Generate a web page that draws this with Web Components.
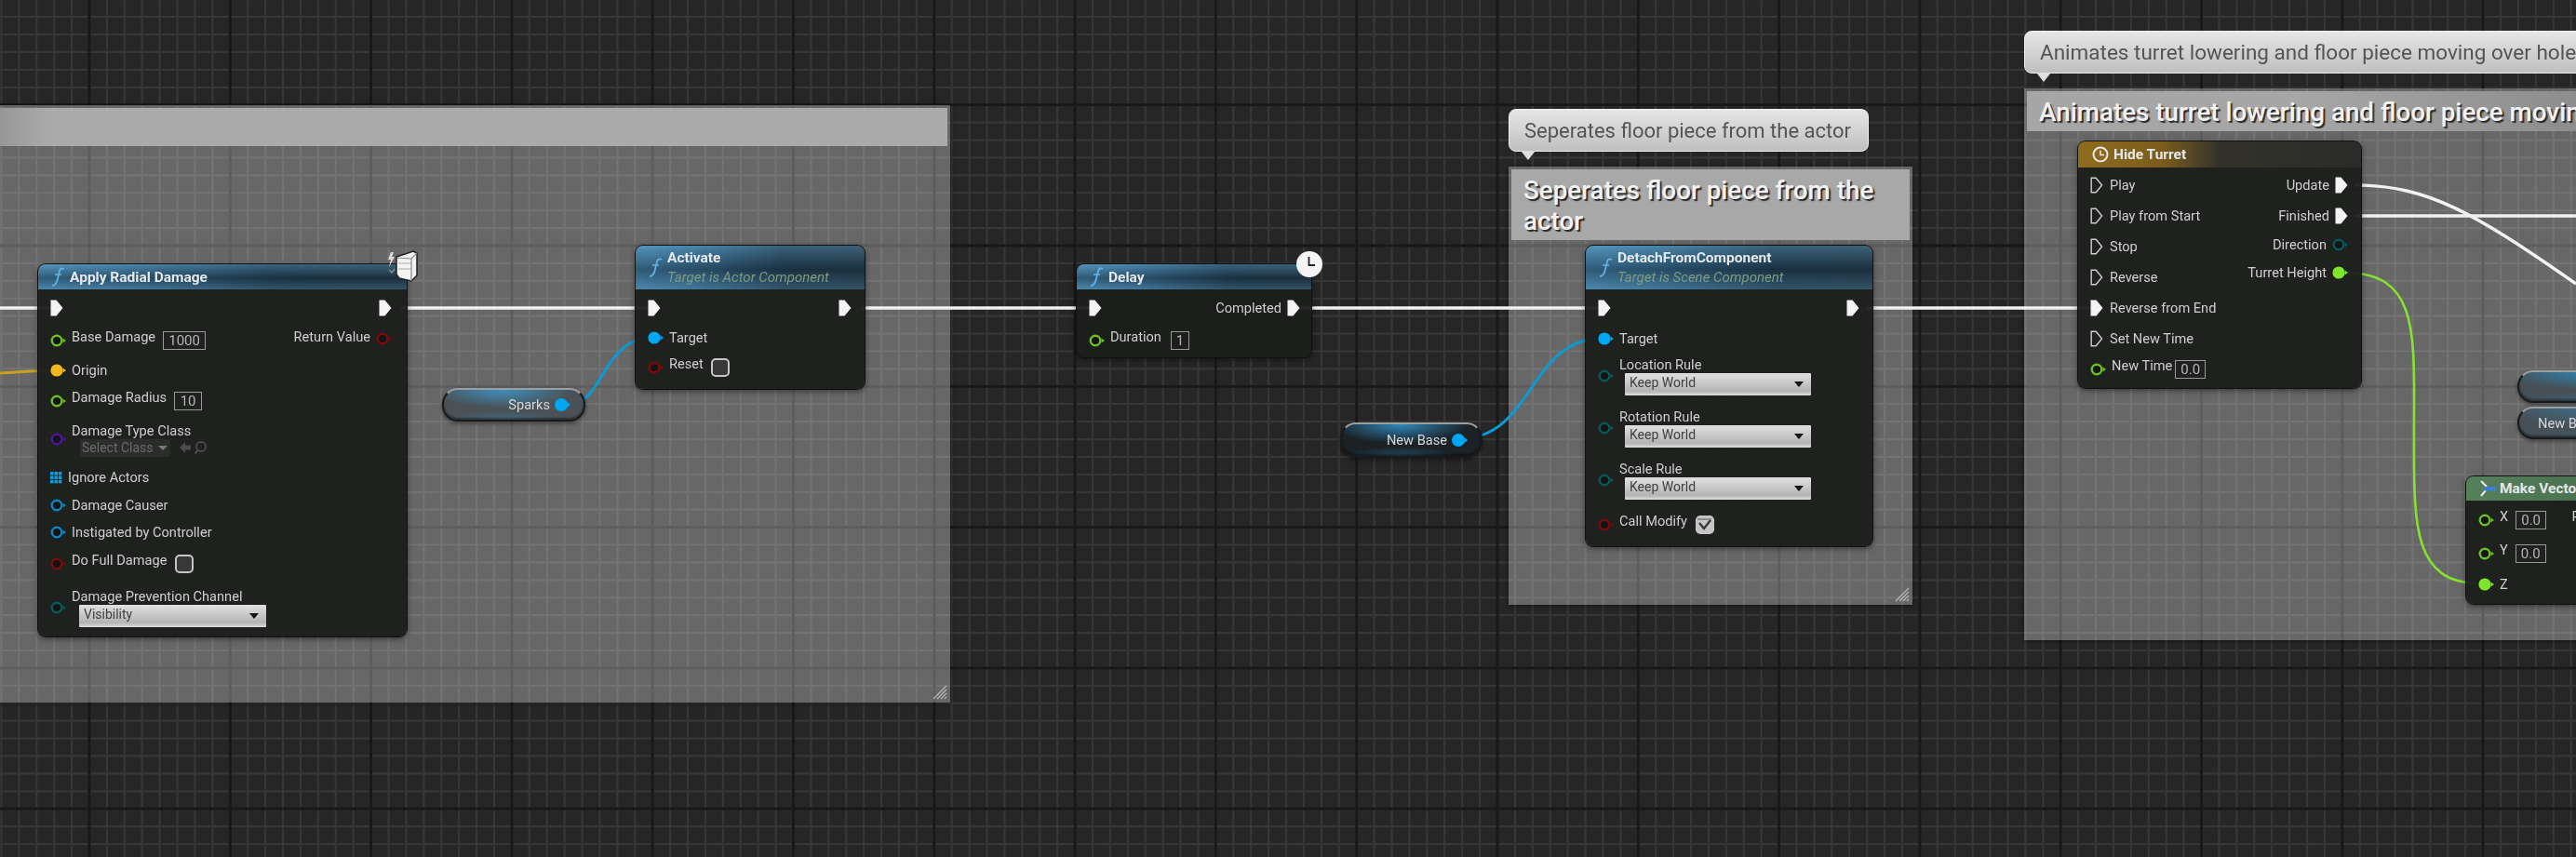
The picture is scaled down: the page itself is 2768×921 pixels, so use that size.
<!DOCTYPE html>
<html>
<head>
<meta charset="utf-8">
<style>
  html, body { margin: 0; padding: 0; background: #262626; overflow: hidden; }
</style>
</head>
<body>
<bp-graph>
  <bp-comment x="-40" y="113" w="1061" h="642" style="--title-bg:linear-gradient(90deg,#8a8a8a,#aaa 90px)"></bp-comment>
  <bp-comment x="1621" y="179" w="434" h="471" heading="Seperates floor piece from the actor" bubble="Seperates floor piece from the actor"></bp-comment>
  <bp-comment x="2175" y="95" w="800" h="593" style="--title-bg:linear-gradient(90deg,#a6a6a6,#a6a6a6 300px,#8c8c8c 600px);--bubble-size:22.5px" heading="Animates turret lowering and floor piece moving over hole" bubble="Animates turret lowering and floor piece moving over hole"></bp-comment>

  <bp-wires></bp-wires>

  <bp-node x="41" y="284" w="396" title="Apply Radial Damage" icon="fn" head="27" style="--pr:16px">
    <bp-row h="40" split><bp-pin kind="exec" on></bp-pin><bp-pin kind="exec" on></bp-pin></bp-row>
    <bp-row h="30" split>
      <bp-row><bp-pin color="#6cc020"></bp-pin><bp-label up>Base Damage</bp-label><bp-value w="46">1000</bp-value></bp-row>
      <bp-row><bp-label up>Return Value</bp-label><bp-pin color="#7c0a0a" style="margin-bottom:4px"></bp-pin></bp-row>
    </bp-row>
    <bp-row h="34"><bp-pin color="#f3b81a" on></bp-pin><bp-label>Origin</bp-label></bp-row>
    <bp-row h="32"><bp-pin color="#6cc020"></bp-pin><bp-label up>Damage Radius</bp-label><bp-value w="30">10</bp-value></bp-row>
    <bp-row h="50"><bp-pin color="#4b159c"></bp-pin><bp-stack><bp-label>Damage Type Class</bp-label><bp-class-picker>Select Class</bp-class-picker></bp-stack></bp-row>
    <bp-row h="32"><bp-pin kind="array" color="#0a9be0"></bp-pin><bp-label>Ignore Actors</bp-label></bp-row>
    <bp-row h="28"><bp-pin color="#0a86c0"></bp-pin><bp-label>Damage Causer</bp-label></bp-row>
    <bp-row h="30"><bp-pin color="#0a86c0"></bp-pin><bp-label>Instigated by Controller</bp-label></bp-row>
    <bp-row h="38"><bp-pin color="#7c0a0a"></bp-pin><bp-label up>Do Full Damage</bp-label><bp-check></bp-check></bp-row>
    <bp-row h="56"><bp-pin color="#055a5a"></bp-pin><bp-stack><bp-label>Damage Prevention Channel</bp-label><bp-combo w="201" style="margin-left:8px">Visibility</bp-combo></bp-stack></bp-row>
    <svg slot="badge" width="36" height="38" viewBox="0 0 36 38" style="position:absolute;right:-14px;top:-17px">
      <path d="M5 4 L2 12 L5 12 L3 20 L9 9 L6 9 L8 4Z" fill="#dcdcdc"/>
      <path d="M3 23 L6 26 L9 22" fill="none" stroke="#888" stroke-width="1.5"/>
      <path d="M11 9 L29 3 L33 5 L33 29 L27 35 L14 32 L11 28Z" fill="#f2f2f2" stroke="#222" stroke-width="1.5"/>
      <path d="M12 10 L27 11 L33 5 M27 11 L27 35" fill="none" stroke="#888" stroke-width="1.2"/>
      <path d="M13 16 H26 M13 22 H26" stroke="#aaa" stroke-width="1.2"/>
    </svg>
  </bp-node>

  <bp-var x="475" y="417" w="154" h="36" glow="#3f8fc0" style="--base:#4a5257" name="Sparks"></bp-var>

  <bp-node x="683" y="264" w="246" title="Activate" subtitle="Target is Actor Component" icon="fn" head="47">
    <bp-row h="40" split><bp-pin kind="exec" on></bp-pin><bp-pin kind="exec" on></bp-pin></bp-row>
    <bp-row h="23"><bp-pin color="#00a8f4" on></bp-pin><bp-label>Target</bp-label></bp-row>
    <bp-row h="41"><bp-pin color="#7c0a0a"></bp-pin><bp-label up>Reset</bp-label><bp-check style="margin-left:2px"></bp-check></bp-row>
  </bp-node>

  <bp-node x="1157" y="284" w="252" title="Delay" icon="fn" head="27" style="--pr:12px">
    <bp-row h="40" split><bp-pin kind="exec" on></bp-pin><bp-row><bp-label>Completed</bp-label><bp-pin kind="exec" on></bp-pin></bp-row></bp-row>
    <bp-row h="30"><bp-pin color="#6cc020"></bp-pin><bp-label up>Duration</bp-label><bp-value w="20" style="margin-left:4px">1</bp-value></bp-row>
    <svg slot="badge" width="30" height="30" viewBox="0 0 30 30" style="position:absolute;right:-13px;top:-15px">
      <circle cx="15" cy="15" r="14" fill="#f4f4f4"/>
      <path d="M14.5 7 V16 H21" fill="none" stroke="#222" stroke-width="1.8"/>
    </svg>
  </bp-node>

  <bp-var x="1440" y="454" w="153" h="38" glow="#2f88bc" style="--base:#1b2125" name="New Base"></bp-var>

  <bp-node x="1704" y="264" w="308" title="DetachFromComponent" subtitle="Target is Scene Component" icon="fn" head="47">
    <bp-row h="40" split><bp-pin kind="exec" on></bp-pin><bp-pin kind="exec" on></bp-pin></bp-row>
    <bp-row h="25"><bp-pin color="#00a8f4" on></bp-pin><bp-label>Target</bp-label></bp-row>
    <bp-row h="56"><bp-pin color="#055a5a"></bp-pin><bp-stack><bp-label>Location Rule</bp-label><bp-combo w="200" style="margin-left:6px">Keep World</bp-combo></bp-stack></bp-row>
    <bp-row h="56"><bp-pin color="#055a5a"></bp-pin><bp-stack><bp-label>Rotation Rule</bp-label><bp-combo w="200" style="margin-left:6px">Keep World</bp-combo></bp-stack></bp-row>
    <bp-row h="56"><bp-pin color="#055a5a"></bp-pin><bp-stack><bp-label>Scale Rule</bp-label><bp-combo w="200" style="margin-left:6px">Keep World</bp-combo></bp-stack></bp-row>
    <bp-row h="40"><bp-pin color="#7c0a0a"></bp-pin><bp-label up>Call Modify</bp-label><bp-check checked></bp-check></bp-row>
  </bp-node>

  <bp-node x="2233" y="152" w="304" title="Hide Turret" icon="clock" head="28" style="--head-bg:linear-gradient(90deg,#8f6c1e,#7a5c1c 30%,#33322a 50%,#2a2c2a)">
    <bp-row split top>
      <bp-stack style="padding-top:2.5px">
        <bp-row h="33" style="--gap:7px"><bp-pin kind="exec"></bp-pin><bp-label>Play</bp-label></bp-row>
        <bp-row h="33" style="--gap:7px"><bp-pin kind="exec"></bp-pin><bp-label>Play from Start</bp-label></bp-row>
        <bp-row h="33" style="--gap:7px"><bp-pin kind="exec"></bp-pin><bp-label>Stop</bp-label></bp-row>
        <bp-row h="33" style="--gap:7px"><bp-pin kind="exec"></bp-pin><bp-label>Reverse</bp-label></bp-row>
        <bp-row h="33" style="--gap:7px"><bp-pin kind="exec" on></bp-pin><bp-label>Reverse from End</bp-label></bp-row>
        <bp-row h="33" style="--gap:7px"><bp-pin kind="exec"></bp-pin><bp-label>Set New Time</bp-label></bp-row>
        <bp-row h="33"><bp-pin color="#6cc020"></bp-pin><bp-label up>New Time</bp-label><bp-value w="33" style="margin-left:-3px">0.0</bp-value></bp-row>
      </bp-stack>
      <bp-stack end style="padding-top:2.5px">
        <bp-row h="33"><bp-label>Update</bp-label><bp-pin kind="exec" on></bp-pin></bp-row>
        <bp-row h="33"><bp-label>Finished</bp-label><bp-pin kind="exec" on></bp-pin></bp-row>
        <bp-row h="29.5"><bp-label>Direction</bp-label><bp-pin color="#055a5a"></bp-pin></bp-row>
        <bp-row h="30"><bp-label>Turret Height</bp-label><bp-pin color="#7de62c" on></bp-pin></bp-row>
      </bp-stack>
    </bp-row>
  </bp-node>

  <bp-var x="2705" y="398" w="200" h="35" glow="#2f86b8" style="--base:#465056"></bp-var>
  <bp-var x="2705" y="437" w="200" h="35" glow="#3d6f8c" left style="--base:#465056" name="New Base"></bp-var>

  <bp-node x="2650" y="512" w="220" title="Make Vector" icon="vector" head="26" style="--head-bg:linear-gradient(90deg,#55805a,#4a7050 60%,#2a3a2c)">
    <bp-row split top>
      <bp-stack>
        <bp-row h="42"><bp-pin color="#6cc020"></bp-pin><bp-label up>X</bp-label><bp-value w="33">0.0</bp-value></bp-row>
        <bp-row h="30"><bp-pin color="#6cc020"></bp-pin><bp-label up>Y</bp-label><bp-value w="33">0.0</bp-value></bp-row>
        <bp-row h="36"><bp-pin color="#7de62c" on></bp-pin><bp-label>Z</bp-label></bp-row>
      </bp-stack>
      <bp-row h="42" style="margin-right:10px"><bp-label up>Return Value</bp-label></bp-row>
    </bp-row>
  </bp-node>
</bp-graph>

<script>
// graph background + free canvas for everything else
class BpGraph extends HTMLElement {
  constructor() {
    super();
    const W = 2768, H = 921, step = 151.3, minor = step / 8;
    let lines = '';
    for (let x = -55.3 - step; x < W; x += minor) lines += `<line x1="${x}" x2="${x}" y1="0" y2="${H}" stroke="#373737" stroke-width="2.2"/>`;
    for (let y = -38.6 - step; y < H; y += minor) lines += `<line y1="${y}" y2="${y}" x1="0" x2="${W}" stroke="#373737" stroke-width="2.2"/>`;
    for (let x = -55.3; x < W; x += step) lines += `<line x1="${x}" x2="${x}" y1="0" y2="${H}" stroke="#181818" stroke-width="2.8"/>`;
    for (let y = -38.6; y < H; y += step) lines += `<line y1="${y}" y2="${y}" x1="0" x2="${W}" stroke="#181818" stroke-width="2.8"/>`;
    this.attachShadow({ mode: 'open' }).innerHTML = `
      <style>
        :host { display: block; position: relative; width: ${W}px; height: ${H}px; overflow: hidden;
                background: #262626; font-family: Roboto, "Liberation Sans", sans-serif; color: #cfcfcf; }
        .canvas { position: absolute; inset: 0; filter: blur(.55px); }
        svg { position: absolute; inset: 0; }
      </style>
      <div class="canvas">
        <svg width="${W}" height="${H}">${lines}</svg>
        <slot></slot>
      </div>`;
  }
}

// places an element on the canvas from its x/y/w/h attributes
const place = (el) => {
  el.style.left = el.getAttribute('x') + 'px';
  el.style.top = el.getAttribute('y') + 'px';
  if (el.hasAttribute('w')) el.style.width = el.getAttribute('w') + 'px';
  if (el.hasAttribute('h')) el.style.height = el.getAttribute('h') + 'px';
};

class BpComment extends HTMLElement {
  connectedCallback() {
    place(this);
    const heading = this.getAttribute('heading') || '';
    const bubble = this.getAttribute('bubble');
    this.attachShadow({ mode: 'open' }).innerHTML = `
      <style>
        :host { display: block; position: absolute; box-sizing: border-box; padding: 3px;
                background: rgba(255,255,255,.3); box-shadow: 0 1px 5px rgba(0,0,0,.55); }
        .title { min-height: 41px; box-sizing: border-box; padding: 6px 13px 4px; background: var(--title-bg, #a8a8a8);
                 color: #f2f2f2; font-size: 27.8px; font-weight: 500; line-height: 33px; white-space: normal;
                 text-shadow: 2px 2px 1px #2a2a2a; }
        .bubble { position: absolute; left: 0; bottom: calc(100% + 16px); box-sizing: border-box; height: 46px;
                  padding: 0 18px 0 16px; display: flex; align-items: center; white-space: nowrap; font-size: var(--bubble-size, 22px); color: #545454;
                  border: 1px solid #f0f0f0; border-radius: 8px; background: linear-gradient(180deg,#e6e6e6,#bfbfbf); }
        .bubble::after { content: ""; position: absolute; left: 12px; top: 100%; border: 8px solid transparent;
                         border-top: 10px solid #dedede; border-bottom: 0; }
        .grip { position: absolute; right: 3px; bottom: 3px; }
      </style>
      ${bubble ? `<div class="bubble">${bubble}</div>` : ''}
      <div class="title">${heading}</div>
      <svg class="grip" width="16" height="16" viewBox="0 0 16 16"><path d="M1 15 L15 1 M5 15 L15 5 M9 15 L15 9 M13 15 L15 13" stroke="#b8b8b8" stroke-width="1.2"/></svg>`;
  }
}

class BpWires extends HTMLElement {
  constructor() {
    super();
    const exec = ['M0 331 H60', 'M430 331 H700', 'M925 331 H1175', 'M1390 331 H1725', 'M2005 331 H2250',
                  'M2530 199 C2610 199 2660 230 2768 305', 'M2530 232 H2768'];
    this.attachShadow({ mode: 'open' }).innerHTML = `
      <style>:host { display: block; position: absolute; inset: 0; } svg { display: block; }</style>
      <svg width="2768" height="921" fill="none">
        ${exec.map((d) => `<path d="${d}" stroke="#f2f2f2" stroke-width="3.4"/>`).join('')}
        <path d="M0 401 C20 400 40 398 62 398" stroke="#c9a11e" stroke-width="3"/>
        <path d="M610 435 C650 435 645 362 705 362" stroke="#0a9ad6" stroke-width="3"/>
        <path d="M1566 472 C1650 472 1640 363 1725 363" stroke="#0a9ad6" stroke-width="3"/>
        <path d="M2520 293 C2600 293 2594 360 2594 460 C2594 560 2590 627 2665 627" stroke="#84e32e" stroke-width="2.6"/>
      </svg>`;
  }
}

const nodeIcons = {
  fn: `<svg width="16" height="22" viewBox="0 0 16 22" fill="none" stroke="#63b3e6" stroke-width="1.7"><path d="M14 2 C10 0 9 3 8 8 C7 13 6 20 1 20"/><path d="M4 8 H11"/></svg>`,
  clock: `<svg width="20" height="20" viewBox="0 0 20 20" fill="none" stroke="#e8e8e8" stroke-width="2"><circle cx="10" cy="10" r="7.5"/><path d="M10 5.5 V10.5 H14" stroke-width="1.5"/></svg>`,
  vector: `<svg width="18" height="20" viewBox="0 0 18 20"><path d="M2 2 L8 8 M2 18 L7 12" stroke="#e8e8e8" stroke-width="2"/><rect x="6" y="8" width="12" height="4.5" fill="#3d7fd6"/></svg>`
};

class BpNode extends HTMLElement {
  connectedCallback() {
    place(this);
    const title = this.getAttribute('title');
    const sub = this.getAttribute('subtitle');
    this.removeAttribute('title');
    this.attachShadow({ mode: 'open' }).innerHTML = `
      <style>
        :host { display: block; position: absolute; box-sizing: border-box; border-radius: 8px;
                background: rgba(27,29,27,.95); box-shadow: 0 0 0 1px #101010, 0 2px 7px rgba(0,0,0,.55); }
        .head { height: ${this.getAttribute('head')}px; display: flex; gap: 4px; padding-left: 14px; box-sizing: border-box;
                border-radius: 8px 8px 0 0; align-items: center; overflow: hidden;
                background: var(--head-bg, linear-gradient(180deg,rgba(95,165,205,.35),rgba(10,30,45,.45) 55%,rgba(70,125,160,.35)),
                                           linear-gradient(90deg,#4f8db4,#3f7599 25%,#263f50 65%,#2a3d49)); }
        .head svg { flex: none; }
        .names { display: flex; flex-direction: column; gap: 3px; }
        .title { font-size: 15.5px; font-weight: 700; color: #e4e8ea; line-height: 18px; white-space: nowrap; }
        .sub { font-size: 15px; font-style: italic; color: #7f9a7f; line-height: 18px; white-space: nowrap; }
        .body { padding: 0 var(--pr, 14px) 3px 13px; }
      </style>
      <div class="head">${nodeIcons[this.getAttribute('icon')] || ''}
        <div class="names"><div class="title">${title}</div>${sub ? `<div class="sub">${sub}</div>` : ''}</div>
      </div>
      <div class="body"><slot></slot></div>
      <slot name="badge"></slot>`;
  }
}

class BpRow extends HTMLElement {
  connectedCallback() {
    if (this.hasAttribute('h')) this.style.height = this.getAttribute('h') + 'px';
    this.attachShadow({ mode: 'open' }).innerHTML = `
      <style>
        :host { display: flex; align-items: center; gap: var(--gap, 6px); }
        :host([split]) { justify-content: space-between; }
        :host([top]) { align-items: flex-start; }
      </style><slot></slot>`;
  }
}

class BpStack extends HTMLElement {
  constructor() {
    super();
    this.attachShadow({ mode: 'open' }).innerHTML = `
      <style>
        :host { display: flex; flex-direction: column; align-items: flex-start; }
        :host([end]) { align-items: flex-end; }
      </style><slot></slot>`;
  }
}

class BpLabel extends HTMLElement {
  constructor() {
    super();
    this.attachShadow({ mode: 'open' }).innerHTML = `
      <style>
        :host { display: block; font-size: 14.6px; line-height: 18px; color: #cfcfcf; white-space: nowrap; }
        :host([up]) { margin-bottom: 8px; }
      </style><slot></slot>`;
  }
}

class BpPin extends HTMLElement {
  connectedCallback() {
    const kind = this.getAttribute('kind');
    const c = this.getAttribute('color') || '#f2f2f2';
    const on = this.hasAttribute('on');
    let svg;
    if (kind === 'exec') {
      svg = `<svg width="14" height="18" viewBox="0 0 14 18"><path d="M1.2 1.2 H6.2 L12.6 9 L6.2 16.8 H1.2Z" fill="${on ? '#f4f4f4' : 'none'}" stroke="${on ? '#f4f4f4' : '#cfcfcf'}" stroke-width="1.4"/></svg>`;
    } else if (kind === 'array') {
      let r = '';
      for (let i = 0; i < 3; i++) for (let j = 0; j < 3; j++) r += `<rect x="${i * 4.4}" y="${j * 4.4}" width="3.6" height="3.6" fill="${c}"/>`;
      svg = `<svg width="13" height="13" viewBox="0 0 13 13">${r}</svg>`;
    } else {
      svg = `<svg width="17" height="16" viewBox="0 0 17 16"><circle cx="7" cy="8" r="${on ? 6.6 : 5.3}" fill="${on ? c : '#141414'}" stroke="${c}" stroke-width="${on ? 0 : 2.4}"/><path d="M13.6 5.4 L17 8 L13.6 10.6Z" fill="${c}"/></svg>`;
    }
    this.attachShadow({ mode: 'open' }).innerHTML = `<style>:host { display: flex; flex: none; }</style>${svg}`;
  }
}

class BpValue extends HTMLElement {
  connectedCallback() {
    this.attachShadow({ mode: 'open' }).innerHTML = `
      <style>
        :host { display: flex; align-items: center; justify-content: center; box-sizing: border-box; flex: none;
                width: ${this.getAttribute('w')}px; height: 20px; margin-left: 2px; border: 1.5px solid #9a9a9a;
                font-size: 15px; color: #b4b4b4; }
      </style><slot></slot>`;
  }
}

class BpCheck extends HTMLElement {
  connectedCallback() {
    const on = this.hasAttribute('checked');
    this.attachShadow({ mode: 'open' }).innerHTML = `
      <style>
        :host { display: block; flex: none; box-sizing: border-box; width: 20px; height: 20px; margin-left: 3px; border-radius: 5px;
                border: 2.6px solid #c6c6c6; background: ${on ? '#c6c6c6' : '#383838'}; }
        svg { display: block; margin: -1px; }
      </style>
      ${on ? '<svg width="17" height="17" viewBox="0 0 17 17"><path d="M1 2 H16 V4 H1Z" fill="#8e8e8e"/><path d="M3 7 L8 13 L15 4" fill="none" stroke="#3b3b3b" stroke-width="2.4"/></svg>' : ''}`;
  }
}

class BpCombo extends HTMLElement {
  connectedCallback() {
    this.attachShadow({ mode: 'open' }).innerHTML = `
      <style>
        :host { display: flex; align-items: center; justify-content: space-between; box-sizing: border-box;
                width: ${this.getAttribute('w')}px; height: 24px; padding: 0 8px 4px 5px; border-radius: 1px;
                background: linear-gradient(180deg,#e0e0e0,#c8c8c8 45%,#b4b4b4 80%,#dedede); font-size: 14px; color: #3f3f3f; }
        i { width: 0; height: 0; border: 5.5px solid transparent; border-top: 6px solid #111; border-bottom: 0; margin-top: 4px; }
      </style><slot></slot><i></i>`;
  }
}

class BpClassPicker extends HTMLElement {
  constructor() {
    super();
    this.attachShadow({ mode: 'open' }).innerHTML = `
      <style>
        :host { display: flex; align-items: center; gap: 9px; margin-left: 9px; }
        .box { display: flex; align-items: center; gap: 5px; height: 19px; padding: 0 3px 0 2px; background: #2b2d2b;
               color: #6b6b6b; font-size: 14px; border-radius: 2px; }
        i { width: 0; height: 0; border: 5px solid transparent; border-top: 5px solid #7a7a7a; border-bottom: 0; }
        svg { display: block; }
      </style>
      <div class="box"><slot></slot><i></i></div>
      <svg width="32" height="16" viewBox="0 0 32 16" fill="none">
        <path d="M1 8 L7 2 V5.5 H13 V10.5 H7 V14Z" fill="#4c4c4c"/>
        <circle cx="24" cy="7" r="5" stroke="#4c4c4c" stroke-width="1.8"/><path d="M20.5 11 L17.5 14.5" stroke="#4c4c4c" stroke-width="2"/>
      </svg>`;
  }
}

class BpVar extends HTMLElement {
  connectedCallback() {
    place(this);
    const name = this.getAttribute('name');
    const glow = this.getAttribute('glow');
    const left = this.hasAttribute('left');
    this.attachShadow({ mode: 'open' }).innerHTML = `
      <style>
        :host { display: flex; position: absolute; box-sizing: border-box; align-items: center; justify-content: ${left ? 'flex-start' : 'flex-end'};
                gap: 4px; padding: ${left ? '0 0 0 20px' : '0 14px 0 0'}; border-radius: 17px;
                border: 2px solid #1a1a1a; border-top-color: #9a9fa2; box-shadow: 0 2px 4px rgba(0,0,0,.45), inset 0 -2px 2px rgba(0,0,0,.4);
                background: radial-gradient(50% 60% at 42% 0, ${glow}, transparent 100%),
                            radial-gradient(40% 30% at 42% 100%, ${glow}66, transparent 100%), var(--base, #333); }
        span { font-size: 14.6px; color: #d4d8da; white-space: nowrap; }
      </style>
      ${name ? `<span>${name}</span>` : ''}
      ${left || !name ? '' : '<svg width="18" height="16" viewBox="0 0 18 16"><circle cx="8" cy="8" r="7" fill="#00a8f4"/><path d="M14.6 5 L18 8 L14.6 11Z" fill="#00a8f4"/></svg>'}`;
  }
}

customElements.define('bp-graph', BpGraph);
customElements.define('bp-comment', BpComment);
customElements.define('bp-wires', BpWires);
customElements.define('bp-node', BpNode);
customElements.define('bp-row', BpRow);
customElements.define('bp-stack', BpStack);
customElements.define('bp-label', BpLabel);
customElements.define('bp-pin', BpPin);
customElements.define('bp-value', BpValue);
customElements.define('bp-check', BpCheck);
customElements.define('bp-combo', BpCombo);
customElements.define('bp-class-picker', BpClassPicker);
customElements.define('bp-var', BpVar);
</script>
</body>
</html>
